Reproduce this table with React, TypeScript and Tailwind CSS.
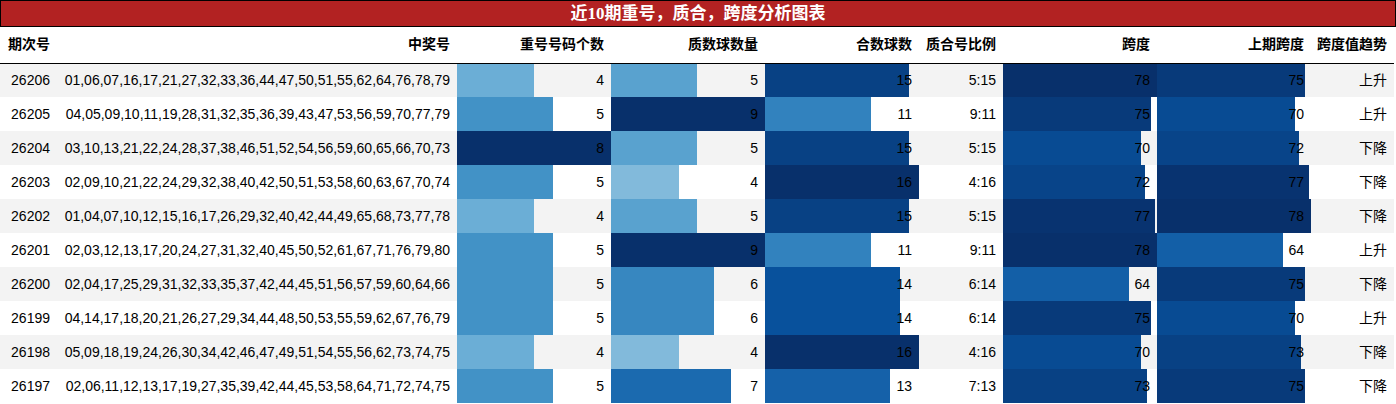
import React from 'react';

type Row = {
  issue: string;
  nums: string;
  repeat: number;
  prime: number;
  comp: number;
  ratio: string;
  span: number;
  prevSpan: number;
  trend: string;
};

const ROWS: Row[] = [
  { issue: '26206', nums: '01,06,07,16,17,21,27,32,33,36,44,47,50,51,55,62,64,76,78,79', repeat: 4, prime: 5, comp: 15, ratio: '5:15', span: 78, prevSpan: 75, trend: '上升' },
  { issue: '26205', nums: '04,05,09,10,11,19,28,31,32,35,36,39,43,47,53,56,59,70,77,79', repeat: 5, prime: 9, comp: 11, ratio: '9:11', span: 75, prevSpan: 70, trend: '上升' },
  { issue: '26204', nums: '03,10,13,21,22,24,28,37,38,46,51,52,54,56,59,60,65,66,70,73', repeat: 8, prime: 5, comp: 15, ratio: '5:15', span: 70, prevSpan: 72, trend: '下降' },
  { issue: '26203', nums: '02,09,10,21,22,24,29,32,38,40,42,50,51,53,58,60,63,67,70,74', repeat: 5, prime: 4, comp: 16, ratio: '4:16', span: 72, prevSpan: 77, trend: '下降' },
  { issue: '26202', nums: '01,04,07,10,12,15,16,17,26,29,32,40,42,44,49,65,68,73,77,78', repeat: 4, prime: 5, comp: 15, ratio: '5:15', span: 77, prevSpan: 78, trend: '下降' },
  { issue: '26201', nums: '02,03,12,13,17,20,24,27,31,32,40,45,50,52,61,67,71,76,79,80', repeat: 5, prime: 9, comp: 11, ratio: '9:11', span: 78, prevSpan: 64, trend: '上升' },
  { issue: '26200', nums: '02,04,17,25,29,31,32,33,35,37,42,44,45,51,56,57,59,60,64,66', repeat: 5, prime: 6, comp: 14, ratio: '6:14', span: 64, prevSpan: 75, trend: '下降' },
  { issue: '26199', nums: '04,14,17,18,20,21,26,27,29,34,44,48,50,53,55,59,62,67,76,79', repeat: 5, prime: 6, comp: 14, ratio: '6:14', span: 75, prevSpan: 70, trend: '上升' },
  { issue: '26198', nums: '05,09,18,19,24,26,30,34,42,46,47,49,51,54,55,56,62,73,74,75', repeat: 4, prime: 4, comp: 16, ratio: '4:16', span: 70, prevSpan: 73, trend: '下降' },
  { issue: '26197', nums: '02,06,11,12,13,17,19,27,35,39,42,44,45,53,58,64,71,72,74,75', repeat: 5, prime: 7, comp: 13, ratio: '7:13', span: 73, prevSpan: 75, trend: '下降' },
];

// matplotlib "Blues" stops
const BLUES: [number, number, number][] = [
  [247, 251, 255],
  [222, 235, 247],
  [198, 219, 239],
  [158, 202, 225],
  [107, 174, 214],
  [66, 146, 198],
  [33, 113, 181],
  [8, 81, 156],
  [8, 48, 107],
];

function blues(t: number) {
  const x = Math.min(1, Math.max(0, t)) * (BLUES.length - 1);
  const i = Math.min(BLUES.length - 2, Math.floor(x));
  const f = x - i;
  const a = BLUES[i];
  const b = BLUES[i + 1];
  const c = a.map((v, k) => Math.round(v + (b[k] - v) * f));
  return `rgb(${c[0]}, ${c[1]}, ${c[2]})`;
}

function barStyle(v: number, max: number): React.CSSProperties {
  const pct = (v / max) * 100;
  const col = blues(v / max);
  return { background: `linear-gradient(90deg, ${col} ${pct}%, transparent ${pct}%)` };
}

const maxOf = (k: keyof Row) => Math.max(...ROWS.map((r) => r[k] as number));

export default function App() {
  const maxRepeat = maxOf('repeat');
  const maxPrime = maxOf('prime');
  const maxComp = maxOf('comp');
  const maxSpan = Math.max(maxOf('span'), maxOf('prevSpan'));

  return (
    <div className="w-[1396px] bg-white font-['Liberation_Sans','Noto_Sans_CJK_SC',sans-serif] text-[14px] text-black">
      <div className="h-[27px] border border-black bg-[#b22222] flex items-center justify-center font-['Liberation_Serif','Noto_Sans_CJK_SC',serif] text-[17px] font-bold text-white leading-none">
        近10期重号，质合，跨度分析图表
      </div>
      <table className="w-[1394px] table-fixed border-collapse">
        <thead>
          <tr className="h-[36px] border-b border-black whitespace-nowrap">
            <th className="w-[57px] px-[7px] text-right font-bold">期次号</th>
            <th className="w-[400px] px-[7px] text-right font-bold">中奖号</th>
            <th className="w-[154px] px-[7px] text-right font-bold">重号号码个数</th>
            <th className="w-[154px] px-[7px] text-right font-bold">质数球数量</th>
            <th className="w-[154px] px-[7px] text-right font-bold">合数球数</th>
            <th className="w-[84px] pl-[4px] pr-[7px] text-right font-bold">质合号比例</th>
            <th className="w-[154px] px-[7px] text-right font-bold">跨度</th>
            <th className="w-[154px] px-[7px] text-right font-bold">上期跨度</th>
            <th className="w-[83px] pl-[4px] pr-[7px] text-right font-bold">跨度值趋势</th>
          </tr>
        </thead>
        <tbody>
          {ROWS.map((r, i) => (
            <tr key={r.issue} className={`h-[34px] whitespace-nowrap ${i % 2 === 0 ? 'bg-[#f3f3f3]' : 'bg-white'}`}>
              <td className="px-[7px] text-right">{r.issue}</td>
              <td className="px-[7px] text-right">{r.nums}</td>
              <td className="px-[7px] text-right" style={barStyle(r.repeat, maxRepeat)}>{r.repeat}</td>
              <td className="px-[7px] text-right" style={barStyle(r.prime, maxPrime)}>{r.prime}</td>
              <td className="px-[7px] text-right" style={barStyle(r.comp, maxComp)}>{r.comp}</td>
              <td className="px-[7px] text-right">{r.ratio}</td>
              <td className="px-[7px] text-right" style={barStyle(r.span, maxSpan)}>{r.span}</td>
              <td className="px-[7px] text-right" style={barStyle(r.prevSpan, maxSpan)}>{r.prevSpan}</td>
              <td className="px-[7px] text-right">{r.trend}</td>
            </tr>
          ))}
        </tbody>
      </table>
    </div>
  );
}
